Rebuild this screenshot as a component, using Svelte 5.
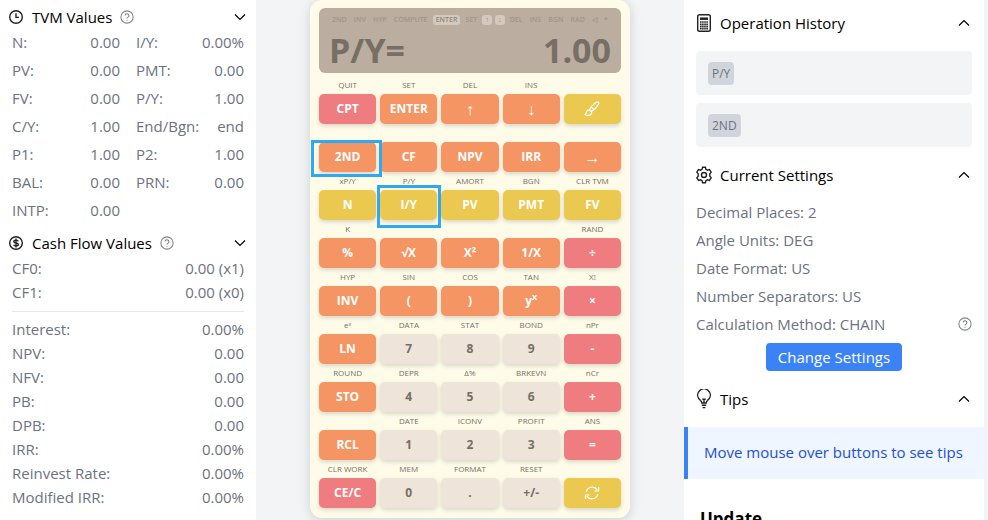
<script>
	const tvm = [
		['N', '0.00'],
		['I/Y', '0.00%'],
		['PV', '0.00'],
		['PMT', '0.00'],
		['FV', '0.00'],
		['P/Y', '1.00'],
		['C/Y', '1.00'],
		['End/Bgn', 'end'],
		['P1', '1.00'],
		['P2', '1.00'],
		['BAL', '0.00'],
		['PRN', '0.00'],
		['INTP', '0.00']
	]

	const cashFlows = [
		['CF0', '0.00 (x1)'],
		['CF1', '0.00 (x0)']
	]

	const results = [
		['Interest', '0.00%'],
		['NPV', '0.00'],
		['NFV', '0.00'],
		['PB', '0.00'],
		['DPB', '0.00'],
		['IRR', '0.00%'],
		['Reinvest Rate', '0.00%'],
		['Modified IRR', '0.00%']
	]

	const indicators = ['2ND', 'INV', 'HYP', 'COMPUTE', 'ENTER', 'SET', '↑', '↓', 'DEL', 'INS', 'BGN', 'RAD', '◁', '*']
	const lit = ['ENTER', '↑', '↓']
	const arrows = ['↑', '↓', '→']

	// [second function, key, color]
	const keys = [
		['QUIT', 'CPT', 'red'],
		['SET', 'ENTER', 'orange'],
		['DEL', '↑', 'orange'],
		['INS', '↓', 'orange'],
		['', 'theme', 'yellow'],
		['', '2ND', 'orange'],
		['', 'CF', 'orange'],
		['', 'NPV', 'orange'],
		['', 'IRR', 'orange'],
		['', '→', 'orange'],
		['xP/Y', 'N', 'yellow'],
		['P/Y', 'I/Y', 'yellow'],
		['AMORT', 'PV', 'yellow'],
		['BGN', 'PMT', 'yellow'],
		['CLR TVM', 'FV', 'yellow'],
		['K', '%', 'orange'],
		['', '√X', 'orange'],
		['', 'X²', 'orange'],
		['', '1/X', 'orange'],
		['RAND', '÷', 'red'],
		['HYP', 'INV', 'orange'],
		['SIN', '(', 'orange'],
		['COS', ')', 'orange'],
		['TAN', 'yx', 'orange'],
		['X!', '×', 'red'],
		['eˣ', 'LN', 'orange'],
		['DATA', '7', 'beige'],
		['STAT', '8', 'beige'],
		['BOND', '9', 'beige'],
		['nPr', '-', 'red'],
		['ROUND', 'STO', 'orange'],
		['DEPR', '4', 'beige'],
		['Δ%', '5', 'beige'],
		['BRKEVN', '6', 'beige'],
		['nCr', '+', 'red'],
		['', 'RCL', 'orange'],
		['DATE', '1', 'beige'],
		['ICONV', '2', 'beige'],
		['PROFIT', '3', 'beige'],
		['ANS', '=', 'red'],
		['CLR WORK', 'CE/C', 'red'],
		['MEM', '0', 'beige'],
		['FORMAT', '.', 'beige'],
		['RESET', '+/-', 'beige'],
		['', 'rotate', 'yellow']
	]

	const history = ['P/Y', '2ND']

	const settings = [
		['Decimal Places', '2'],
		['Angle Units', 'DEG'],
		['Date Format', 'US'],
		['Number Separators', 'US'],
		['Calculation Method', 'CHAIN']
	]

	let open = $state({ tvm: true, cash: true, history: true, settings: true, tips: true })
</script>

{#snippet help()}
	<svg class="help" viewBox="0 0 16 16" aria-hidden="true">
		<circle cx="8" cy="8" r="7" />
		<path d="M5.9 6.4a2.1 2.1 0 1 1 3.3 1.7c-.8.5-1.2.8-1.2 1.6M8 11.2v1" />
	</svg>
{/snippet}

{#snippet chevron(up)}
	<svg class="chevron" viewBox="0 0 12 12" aria-hidden="true">
		{#if up}
			<path d="M1 8.5 6 3.5l5 5" />
		{:else}
			<path d="M1 3.5l5 5 5-5" />
		{/if}
	</svg>
{/snippet}

<div class="page">
	<aside class="values">
		<section>
			<button class="head" onclick={() => (open.tvm = !open.tvm)}>
				<svg class="icon" viewBox="0 0 16 16" aria-hidden="true">
					<circle cx="8" cy="8" r="6.3" />
					<path d="M8 4.2V8.4h3" />
				</svg>
				<span>TVM Values</span>
				{@render help()}
				{@render chevron(false)}
			</button>
			{#if open.tvm}
				<dl class="tvm">
					{#each tvm as [name, value]}
						<div><dt>{name}:</dt><dd>{value}</dd></div>
					{/each}
				</dl>
			{/if}
		</section>
		<section>
			<button class="head" onclick={() => (open.cash = !open.cash)}>
				<svg class="icon" viewBox="0 0 16 16" aria-hidden="true">
					<circle cx="8" cy="8" r="6.3" />
					<path
						stroke-width="1.4"
						d="M10.3 6.3C10 5.5 9.200 5.100 8 5.100C6.700 5.100 5.800 5.600 5.800 6.500C5.800 7.500 6.800 7.800 8 8C9.300 8.200 10.300 8.600 10.300 9.600C10.300 10.500 9.300 11 8 11C6.800 11 5.900 10.500 5.600 9.700M8 3.600V12.400"
					/>
				</svg>
				<span>Cash Flow Values</span>
				{@render help()}
				{@render chevron(false)}
			</button>
			{#if open.cash}
				<dl class="flows">
					{#each cashFlows as [name, value]}
						<div><dt>{name}:</dt><dd>{value}</dd></div>
					{/each}
				</dl>
				<hr />
				<dl>
					{#each results as [name, value]}
						<div><dt>{name}:</dt><dd>{value}</dd></div>
					{/each}
				</dl>
			{/if}
		</section>
	</aside>

	<main>
		<div class="calculator">
			<div class="screen">
				<div class="indicators">
					{#each indicators as name}
						<span class:lit={lit.includes(name)}>{name}</span>
					{/each}
				</div>
				<div class="readout">
					<span>P/Y=</span>
					<output>1.00</output>
				</div>
			</div>
			<div class="keypad">
				{#each keys as [second, key, color]}
					<div class="cell">
						<span class="second">{second}</span>
						<div class="slot">
							{#if key === 'theme'}
								<button class={color} aria-label="Theme">
									<svg viewBox="0 0 16 16" aria-hidden="true">
										<path
											d="M5.5 8.8C7 6 10.5 2.2 13 1c1.2-.5 2.2.5 1.7 1.7C13.500 5.200 10 8.900 7.200 10.500zM5.300 8.900c-1.500 0-2.500.9-2.800 2.300-.2 1.200-.7 1.900-1.500 2.300 1.700 1.300 4.800 1.400 6-.4.800-1 .7-2 .2-2.700zM7.600 6.300l2.200 2.200"
										/>
									</svg>
								</button>
							{:else if key === 'rotate'}
								<button class={color} aria-label="Rotate">
									<svg viewBox="0 0 16 16" aria-hidden="true">
										<path
											d="M2.2 7A6 6 0 0 1 13.2 5M14.6 2v4h-4M13.8 9A6 6 0 0 1 2.8 11M1.4 14v-4h4"
										/>
									</svg>
								</button>
							{:else if key === 'yx'}
								<button class={color}><span>y<sup>x</sup></span></button>
							{:else}
								<button class={color} class:arrow={arrows.includes(key)}>{key}</button>
							{/if}
							{#if key === '2ND'}
								<span class="mark first"></span>
							{:else if key === 'I/Y'}
								<span class="mark next"></span>
							{/if}
						</div>
					</div>
				{/each}
			</div>
		</div>
	</main>

	<aside class="info">
		<section>
			<button class="head" onclick={() => (open.history = !open.history)}>
				<svg class="icon" viewBox="0 0 16 18" aria-hidden="true">
					<rect x="1.7" y=".8" width="12.6" height="16.4" rx="1.8" />
					<path stroke-width="2.5" d="M4 4.7h8" />
					<path
						stroke-width="1.6"
						stroke-dasharray="1.6 .5"
						d="M4 8h8M4 10.2h8M4 12.4h8M4 14.6h8"
					/>
				</svg>
				<span>Operation History</span>
				{@render chevron(true)}
			</button>
			{#if open.history}
				<ul class="history">
					{#each history as item}
						<li><kbd>{item}</kbd></li>
					{/each}
				</ul>
			{/if}
		</section>
		<section>
			<button class="head" onclick={() => (open.settings = !open.settings)}>
				<svg class="icon" viewBox="0 0 16 18" aria-hidden="true">
					<circle cx="8" cy="9" r="2.5" />
					<path
						d="M6.600 1.300h2.800l.5 2 1.600.9 2-.6 1.700 2.600-1.400 1.500v2.600l1.400 1.500-1.700 2.600-2-.6-1.600.9-.5 2H6.600l-.5-2-1.600-.9-2 .6L.8 11.800l1.400-1.500V7.700L.8 6.200l1.700-2.600 2 .6 1.600-.9z"
					/>
				</svg>
				<span>Current Settings</span>
				{@render chevron(true)}
			</button>
			{#if open.settings}
				<ul class="settings">
					{#each settings as [name, value]}
						<li>
							{name}: {value}
							{#if name === 'Calculation Method'}
								{@render help()}
							{/if}
						</li>
					{/each}
				</ul>
				<button class="change">Change Settings</button>
			{/if}
		</section>
		<section>
			<button class="head" onclick={() => (open.tips = !open.tips)}>
				<svg class="icon" viewBox="0 0 16 20" aria-hidden="true">
					<path
						d="M5.8 14c0-2-1.500-2.700-2.900-4.200A6.300 6.300 0 1 1 13.100 9.800c-1.400 1.500-2.900 2.200-2.900 4.200zM8 14v-3.700M6.300 10.300h3.400M5.800 16.300h4.400M6.600 18.600h2.800"
					/>
				</svg>
				<span>Tips</span>
				{@render chevron(true)}
			</button>
			{#if open.tips}
				<p class="tip">Move mouse over buttons to see tips</p>
			{/if}
		</section>
		<h2>Update</h2>
	</aside>
</div>

<style>
	:global(body) {
		background: #f3f4f6;
	}

	.page {
		display: grid;
		grid-template-columns: 256px minmax(0, 1fr) 300px;
		box-sizing: border-box;
		height: 100vh;
		padding-right: 4px;
		overflow: hidden;
		font: 15px/24px 'Open Sans', 'Noto Sans', sans-serif;
		color: #6b7280;
	}

	button {
		border: 0;
		padding: 0;
		font: inherit;
		cursor: pointer;
	}

	svg {
		flex: none;
		fill: none;
		stroke: currentColor;
		stroke-width: 1.2;
	}

	dl,
	dd,
	ul,
	p {
		margin: 0;
		padding: 0;
	}

	ul {
		list-style: none;
	}

	aside {
		overflow: hidden;
		background: #fff;
	}

	.head {
		display: flex;
		align-items: center;
		gap: 8px;
		width: 100%;
		background: none;
		color: #000;
	}

	.icon {
		width: 16px;
		color: #222;
		stroke-width: 1.4;
	}

	.help {
		width: 14px;
		height: 14px;
		color: #80838f;
	}

	.chevron {
		width: 12px;
		height: 12px;
		margin-left: auto;
	}

	.values section {
		padding-top: 5px;
	}

	.values .head {
		height: 24px;
		padding: 0 10px 0 8px;
	}

	dl {
		padding: 0 12px;
	}

	dl div {
		display: flex;
		justify-content: space-between;
	}

	.tvm {
		display: grid;
		grid-template-columns: 1fr 1fr;
		column-gap: 16px;
		margin: -1px 0 2px;
		line-height: 28px;
	}

	.flows {
		padding-top: 1px;
	}

	hr {
		height: 1px;
		margin: 7px 12px 5px;
		border: 0;
		background: #e5e7eb;
	}

	main {
		display: flex;
		justify-content: center;
		align-items: flex-start;
	}

	.calculator {
		box-sizing: border-box;
		width: 320px;
		padding: 8px 9px 10px;
		border-radius: 12px;
		background: #fffbe9;
		box-shadow: 0 2px 12px rgb(0 0 0 / 0.15);
	}

	.screen {
		height: 65px;
		border-radius: 6px;
		background: #bbada0;
		color: #776e65;
		font-weight: 700;
	}

	.indicators {
		display: flex;
		justify-content: space-between;
		align-items: center;
		height: 24px;
		padding: 0 13px;
		font-size: 7px;
		font-weight: 600;
		line-height: 10px;
		color: #a39689;
	}

	.lit {
		margin: 0 -2px;
		padding: 0 3px;
		border-radius: 3px;
		background: #d3c9bf;
		color: #94877a;
	}

	.readout {
		display: flex;
		justify-content: space-between;
		padding: 0 10px;
		font-size: 34px;
		line-height: 36px;
	}

	.keypad {
		display: grid;
		grid-template-columns: repeat(5, 1fr);
		column-gap: 4px;
		padding-top: 3px;
	}

	.second {
		display: block;
		height: 18px;
		font-size: 8px;
		line-height: 18px;
		text-align: center;
		color: #776e65;
	}

	.slot {
		position: relative;
	}

	.slot button {
		display: flex;
		justify-content: center;
		align-items: center;
		width: 100%;
		height: 30px;
		border-radius: 5px;
		box-shadow: 0 2px 4px rgb(0 0 0 / 0.15);
		font-size: 12px;
		font-weight: 700;
		color: #fff;
	}

	.slot .arrow {
		font-size: 16px;
	}

	sup {
		font-size: 9px;
		line-height: 0;
	}

	.slot svg {
		width: 16px;
		height: 16px;
	}

	.slot .red {
		background: #ef7c7f;
	}

	.slot .orange {
		background: #f59563;
	}

	.slot .yellow {
		background: #ebc850;
	}

	.slot .beige {
		background: #eee4da;
		color: #776e65;
	}

	.mark {
		position: absolute;
		z-index: 1;
		border: 3px solid #2ea8f2;
		pointer-events: none;
	}

	.first {
		inset: -2px -6px -5px -8px;
	}

	.next {
		inset: -5px -4px -8px -3px;
	}

	.info {
		display: flex;
		flex-direction: column;
		gap: 12px;
		padding-top: 7px;
	}

	.info .head {
		height: 32px;
		padding: 0 14px 0 12px;
	}

	.history {
		display: grid;
		gap: 8px;
		padding: 12px 12px 0;
	}

	.history li {
		display: flex;
		align-items: center;
		height: 44px;
		padding: 0 12px;
		border-radius: 4px;
		background: #f3f4f6;
	}

	kbd {
		padding: 0 4px;
		border-radius: 4px;
		background: #d1d5db;
		font: 12px/23px 'Open Sans', 'Noto Sans', sans-serif;
	}

	.settings {
		padding: 7px 12px 5px;
		line-height: 28px;
	}

	.settings li {
		display: flex;
		justify-content: space-between;
		align-items: center;
	}

	.change {
		display: block;
		height: 28px;
		margin: 0 auto;
		padding: 0 12px;
		border-radius: 4px;
		background: #3b82f6;
		color: #fff;
	}

	.tip {
		margin-top: 12px;
		padding: 13px 16px 15px;
		border-left: 4px solid #3b82f6;
		background: #eff6ff;
		color: #1d4ed8;
	}

	h2 {
		margin: 16px;
		font-size: 17px;
		line-height: 24px;
		color: #000;
	}
</style>
